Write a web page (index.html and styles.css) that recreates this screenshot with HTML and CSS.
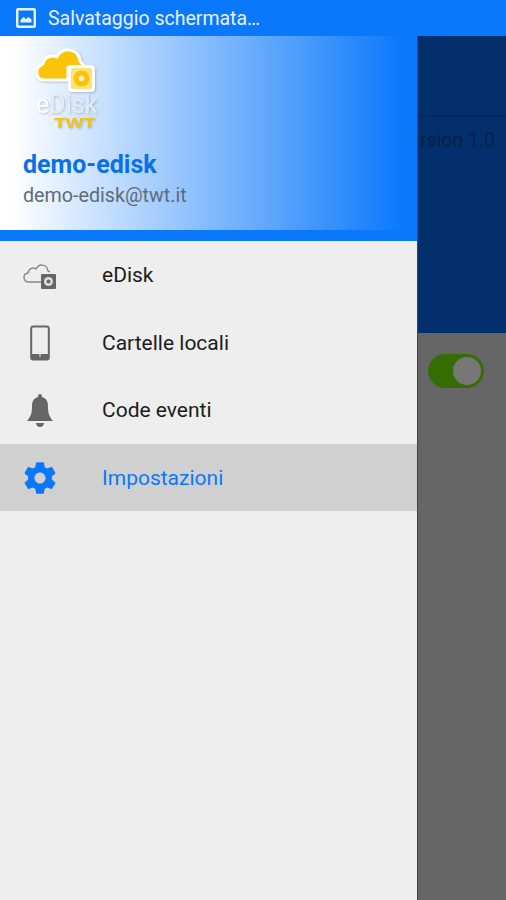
FILE: index.html
```html
<!DOCTYPE html>
<html>
<head>
  <title>eDisk</title>
  <link rel="stylesheet" href="styles.css">
</head>
<body>

<div class="status-bar">
  <svg class="status-icon" width="20" height="20" viewBox="0 0 20 20">
    <rect x="1.200" y="1.200" width="17.600" height="17.600" rx="1" fill="none" stroke="#e8f2ff" stroke-width="2.400"/>
    <path d="M4.500 14.500 L4.500 12 L7.500 9 L10 11 L12.500 9 L15.500 11.500 L15.500 14.500 Z" fill="#e8f2ff"/>
  </svg>
  <span class="status-text">Salvataggio schermata…</span>
</div>

<div class="screen">
  <div class="drawer">
    <div class="drawer-header">
      <svg class="logo" width="64" height="92" viewBox="0 0 64 92">
        <path d="M8 38 C-1 38 -2 25 7 22 C8 14 17 13 21 15 C25 4 43 6 44 19 L49 25 L32 25 L32 38 Z" fill="#fcc30b" stroke="#fff" stroke-width="3" stroke-linejoin="round"/>
        <rect x="33" y="24" width="25" height="25" rx="3" fill="#fff" stroke="#fff" stroke-width="2"/>
        <rect x="35" y="26" width="21" height="21" rx="2" fill="#fde27a"/>
        <circle cx="45.500" cy="36.500" r="8" fill="#fcc30b"/>
        <circle cx="45.500" cy="36.500" r="2.800" fill="#fff3c0"/>
        <text class="logo-name" x="0" y="71"><tspan class="logo-e">e</tspan>Disk</text>
        <text class="logo-twt" x="18" y="86" textLength="41" lengthAdjust="spacingAndGlyphs">TWT</text>
      </svg>
      <div class="user-name">demo-edisk</div>
      <div class="user-mail">demo-edisk@twt.it</div>
    </div>

    <div class="menu">
      <div class="menu-row">
        <span class="menu-icon">
          <svg width="36" height="30" viewBox="0 0 36 30">
            <path d="M20 21 L7 21 C1 21 0 13 6 12 C7 7 11 6 14 8 C17 2 25 3 26 10 L28 11" fill="none" stroke="#888" stroke-width="1.400"/>
            <rect x="19" y="13" width="15" height="15" rx="1" fill="#666"/>
            <circle cx="26.500" cy="20.500" r="4.500" fill="#ddd"/>
            <circle cx="26.500" cy="20.500" r="2" fill="#666"/>
          </svg>
        </span>
        <span class="menu-label">eDisk</span>
      </div>
      <div class="menu-row">
        <span class="menu-icon">
          <svg width="22" height="36" viewBox="0 0 22 36">
            <rect x="2.200" y="1.500" width="17.600" height="33" rx="2" fill="none" stroke="#666" stroke-width="2"/>
            <rect x="2" y="29" width="18" height="5.500" fill="#666"/>
            <rect x="10.500" y="29" width="1" height="3" fill="#eee"/>
          </svg>
        </span>
        <span class="menu-label">Cartelle locali</span>
      </div>
      <div class="menu-row">
        <span class="menu-icon">
          <svg width="28" height="36" viewBox="0 0 28 36">
            <path d="M14 1 C12.500 1 12 2 12 4 C7 5.500 6 9 6 14 C6 20 5 23 1 28 L27 28 C23 23 22 20 22 14 C22 9 21 5.500 16 4 C16 2 15.500 1 14 1 Z" fill="#666"/>
            <path d="M10 30 L18 30 C17.500 33 16 34 14 34 C12 34 10.500 33 10 30 Z" fill="#666"/>
          </svg>
        </span>
        <span class="menu-label">Code eventi</span>
      </div>
      <div class="menu-row active">
        <span class="menu-icon">
          <svg width="38" height="38" viewBox="0 0 24 24">
            <path fill-rule="evenodd" fill="#0a78fb" d="M19.430 12.980c.04-.32.070-.64.070-.98s-.03-.66-.07-.98l2.110-1.650c.19-.15.240-.42.120-.64l-2-3.460c-.12-.22-.39-.3-.61-.22l-2.490 1c-.52-.4-1.080-.73-1.690-.98l-.38-2.650C14.460 2.180 14.250 2 14 2h-4c-.25 0-.46.18-.49.42l-.38 2.650c-.61.25-1.170.59-1.690.98l-2.490-1c-.23-.09-.49 0-.61.22l-2 3.460c-.13.22-.07.49.12.64l2.110 1.650c-.04.32-.07.65-.07.98s.03.66.07.98l-2.110 1.650c-.19.15-.24.42-.12.64l2 3.460c.12.22.39.3.61.22l2.490-1c.52.4 1.080.73 1.690.98l.38 2.650c.03.24.24.42.49.42h4c.25 0 .46-.18.49-.42l.38-2.650c.61-.25 1.170-.59 1.690-.98l2.490 1c.23.09.49 0 .61-.22l2-3.460c.12-.22.07-.49-.12-.64l-2.110-1.650zM12 15.500c-1.930 0-3.500-1.570-3.500-3.500s1.570-3.500 3.500-3.500 3.500 1.570 3.500 3.500-1.570 3.500-3.500 3.500z"/>
          </svg>
        </span>
        <span class="menu-label">Impostazioni</span>
      </div>
    </div>
  </div>

  <div class="behind">
    <div class="behind-blue">
      <div class="behind-bar"></div>
      <div class="behind-version">Version 1.0</div>
    </div>
    <div class="behind-grey">
      <div class="toggle"><span class="toggle-knob"></span></div>
    </div>
  </div>
</div>

</body>
</html>
```

FILE: styles.css
```css
body {
  margin: 0;
  height: 900px;
  overflow: hidden;
  font-family: Roboto, sans-serif;
  background-color: #666;
}

.status-bar {
  height: 36px;
  display: flex;
  align-items: center;
  background-color: #0a78fb;
  color: #e8f2ff;
}

.status-icon {
  margin-left: 16px;
}

.status-text {
  margin-left: 12px;
  font-size: 19.500px;
}

.screen {
  display: flex;
  height: 864px;
}

.drawer {
  width: 417px;
  flex-shrink: 0;
  background-color: #eee;
}

.drawer-header {
  height: 194px;
  padding-left: 23px;
  background: linear-gradient(to right, #fff 3%, #0a78fb 97%);
  border-bottom: 11px solid #0a78fb;
}

.logo {
  display: block;
  margin-left: 13px;
  padding-top: 6px;
  filter: drop-shadow(1px 1px 1px rgba(0, 0, 0, 0.2));
}

.logo-name {
  font-family: Roboto, sans-serif;
  font-size: 25px;
  fill: #e6ecf4;
}

.logo-e {
  fill: #fff;
}

.logo-twt {
  font-family: "Liberation Sans", sans-serif;
  font-size: 14px;
  font-weight: bold;
  fill: #f5c211;
}

.user-name {
  margin-top: 16px;
  font-size: 25px;
  font-weight: 700;
  line-height: 30px;
  color: #0a6fe8;
}

.user-mail {
  margin-top: 1px;
  font-size: 19.700px;
  line-height: 30px;
  color: #5f6b78;
}

.menu-row {
  height: 67.500px;
  display: flex;
  align-items: center;
  font-size: 21px;
  color: #1c1c1c;
}

.menu-row.active {
  background-color: #d0d0d0;
  color: #0a78fb;
}

.menu-label {
  padding-top: 1px;
}

.menu-icon {
  width: 80px;
  margin-right: 22px;
  padding-top: 2px;
  display: flex;
  justify-content: center;
}

.behind {
  flex: 1;
  min-width: 0;
  display: flex;
  flex-direction: column;
  border-left: 1px solid #444;
}

.behind-blue {
  height: 297px;
  background-color: #03306c;
}

.behind-bar {
  height: 79px;
  border-bottom: 2px solid #032a5e;
}

.behind-version {
  display: flex;
  justify-content: flex-end;
  overflow: hidden;
  margin-top: 12px;
  padding-right: 11px;
  font-size: 19.500px;
  line-height: 24px;
  white-space: nowrap;
  color: #02214b;
}

.behind-grey {
  flex: 1;
  background-color: #666;
}

.toggle {
  width: 56px;
  height: 34px;
  margin: 21px 0 0 10px;
  display: flex;
  justify-content: flex-end;
  align-items: center;
  box-sizing: border-box;
  padding-right: 3px;
  border-radius: 17px;
  background-color: #366d02;
}

.toggle-knob {
  width: 28px;
  height: 28px;
  border-radius: 50%;
  background-color: #777;
}
```
